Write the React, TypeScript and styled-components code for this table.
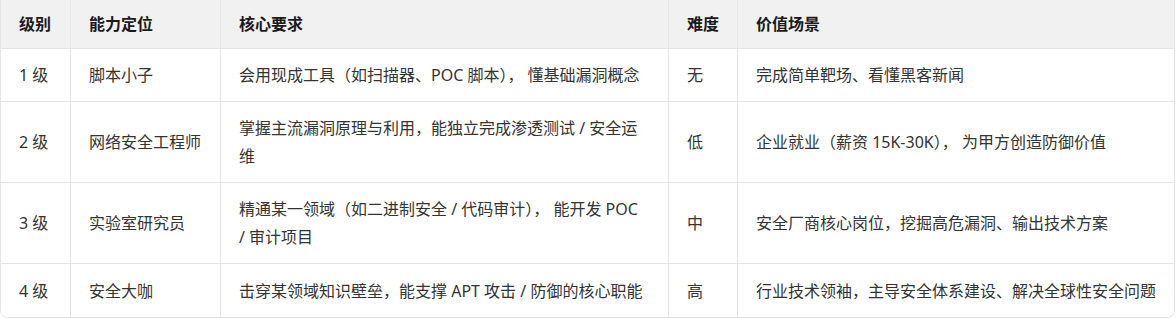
import React from "react";
import styled, { createGlobalStyle } from "styled-components";

const Global = createGlobalStyle`
  html, body { margin: 0; padding: 0; background: #ffffff; }
  body {
    font-family: "Noto Sans", "Noto Sans CJK SC", sans-serif;
    -webkit-font-smoothing: antialiased;
  }
`;

const Wrapper = styled.div`
  width: 1175px;
  box-sizing: border-box;
  border: 1px solid #e6e6e6;
  border-top: none;
  border-radius: 0 0 8px 8px;
  overflow: hidden;
`;

const Grid = styled.div`
  display: grid;
  grid-template-columns: 70px 150px 448px 69px 1fr;
`;

const Cell = styled.div<{ $head?: boolean; $last?: boolean; $lastRow?: boolean }>`
  box-sizing: border-box;
  display: flex;
  align-items: center;
  padding: ${(p) => (p.$head ? "10px 18px 10px 18px" : "12px 18px")};
  min-height: ${(p) => (p.$head ? "49px" : "53px")};
  background: ${(p) => (p.$head ? "#f1f1f1" : "#ffffff")};
  border-right: ${(p) => (p.$last ? "none" : "1px solid #e6e6e6")};
  border-bottom: ${(p) => (p.$lastRow ? "none" : "1px solid #e6e6e6")};
  font-size: 16px;
  line-height: 28px;
  font-weight: ${(p) => (p.$head ? 700 : 400)};
  color: ${(p) => (p.$head ? "#1a1a1a" : "#333333")};
  font-family: "Noto Sans", "Noto Sans CJK SC", sans-serif;
`;

const headers = ["级别", "能力定位", "核心要求", "难度", "价值场景"];

const rows: string[][] = [
  ["1 级", "脚本小子", "会用现成工具（如扫描器、POC 脚本）， 懂基础漏洞概念", "无", "完成简单靶场、看懂黑客新闻"],
  ["2 级", "网络安全工程师", "掌握主流漏洞原理与利用，能独立完成渗透测试 / 安全运维", "低", "企业就业（薪资 15K-30K）， 为甲方创造防御价值"],
  ["3 级", "实验室研究员", "精通某一领域（如二进制安全 / 代码审计）， 能开发 POC /\u00a0审计项目", "中", "安全厂商核心岗位，挖掘高危漏洞、输出技术方案"],
  ["4 级", "安全大咖", "击穿某领域知识壁垒，能支撑 APT 攻击 / 防御的核心职能", "高", "行业技术领袖，主导安全体系建设、解决全球性安全问题"],
];

export default function App() {
  return (
    <>
      <Global />
      <Wrapper>
        <Grid>
          {headers.map((h, i) => (
            <Cell key={h} $head $last={i === headers.length - 1}>
              {h}
            </Cell>
          ))}
          {rows.map((r, ri) =>
            r.map((c, ci) => (
              <Cell
                key={`${ri}-${ci}`}
                $last={ci === r.length - 1}
                $lastRow={ri === rows.length - 1}
              >
                {c}
              </Cell>
            ))
          )}
        </Grid>
      </Wrapper>
    </>
  );
}
